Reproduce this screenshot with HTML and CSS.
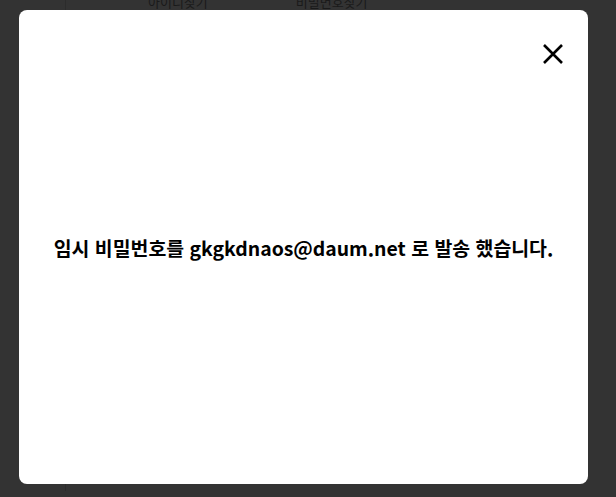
FILE: index.html
```html
<!DOCTYPE html>
<html lang="ko">
<head>
<meta charset="utf-8">
<link rel="stylesheet" href="styles.css">
<title>비밀번호 찾기</title>
</head>
<body>
<div class="page">
  <div class="tabs">
    <span class="tab">아이디찾기</span>
    <span class="tab">비밀번호찾기</span>
  </div>
</div>
<div class="modal">
  <button class="close" aria-label="닫기">
    <svg width="20" height="20" viewBox="0 0 20 20"><path d="M1 1 L19 19 M19 1 L1 19" stroke="#000" stroke-width="2.6" fill="none"/></svg>
  </button>
  <p class="msg">임시 비밀번호를 gkgkdnaos@daum.net 로 발송 했습니다.</p>
</div>
</body>
</html>
```
FILE: styles.css
```css
html, body {
  margin: 0;
  height: 100%;
  background: #333333;
  overflow: hidden;
}
body {
  font-family: "Noto Sans CJK KR", "Noto Sans", sans-serif;
}
.page {
  margin-left: 65px;
  border-left: 1px solid #2c2c2c;
  height: 100%;
}
.tabs {
  display: flex;
  margin-top: -6px;
  padding-left: 82px;
  gap: 88px;
}
.tab {
  font-size: 13px;
  line-height: 16px;
  color: #1a1a1a;
}
.modal {
  position: fixed;
  left: 19px;
  top: 10px;
  width: 569px;
  height: 474px;
  background: #fff;
  border-radius: 8px;
  display: flex;
  align-items: center;
  justify-content: center;
}
.close {
  position: absolute;
  left: 524px;
  top: 34px;
  width: 20px;
  height: 20px;
  padding: 0;
  border: 0;
  background: none;
  display: flex;
}
.msg {
  margin: 0;
  font-size: 19.4px;
  font-weight: 700;
  color: #000;
}
```
